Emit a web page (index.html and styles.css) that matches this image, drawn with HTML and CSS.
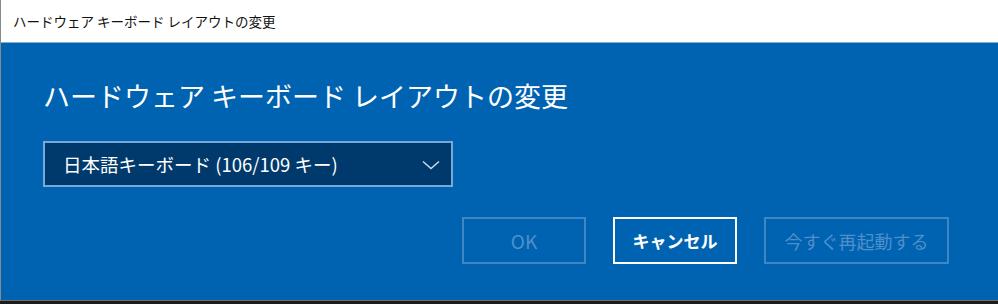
FILE: index.html
```html
<!DOCTYPE html>
<html lang="ja">
<head>
    <meta charset="UTF-8">
    <meta name="viewport" content="width=device-width, initial-scale=1.0">
    <title>ハードウェア キーボード レイアウトの変更</title>
    <link rel="stylesheet" href="styles.css">
</head>
<body>
    <div class="window">
        <div class="titlebar">ハードウェア キーボード レイアウトの変更</div>
        <div class="content">
            <h1 class="heading">ハードウェア キーボード レイアウトの変更</h1>
            <div class="select">
                <span class="select-text">日本語キーボード (106/109 キー)</span>
                <svg class="chevron" width="18" height="10" viewBox="0 0 18 10">
                    <polyline points="1,1.5 9,8.5 17,1.5" fill="none" stroke="#c9d9ea" stroke-width="1.5"/>
                </svg>
            </div>
            <div class="buttons">
                <button class="btn disabled latin">OK</button>
                <button class="btn focused">キャンセル</button>
                <button class="btn disabled wide">今すぐ再起動する</button>
            </div>
        </div>
    </div>
</body>
</html>
```

FILE: styles.css
```css
body {
    margin: 0;
    padding: 0;
    width: 998px;
    height: 304px;
    overflow: hidden;
    background: #1c1c1c;
    font-family: 'Noto Sans CJK JP', 'Noto Sans', sans-serif;
}
.window {
    height: 300px;
    border-left: 1px solid #8a8a8a;
    border-bottom: 1px solid #6f6f6f;
    display: flex;
    flex-direction: column;
}
.titlebar {
    height: 43px;
    box-sizing: border-box;
    background: #fff;
    border-bottom: 1px solid #7fb0dc;
    padding: 0 0 0 12px;
    font-size: 13.5px;
    line-height: 43px;
    color: #111;
}
.content {
    flex: 1;
    background: #0063b1;
    padding: 35px 49px 0 42px;
    display: flex;
    flex-direction: column;
}
.heading {
    margin: 0;
    font-size: 27px;
    font-weight: normal;
    line-height: 36px;
    color: #fff;
}
.select {
    margin-top: 27px;
    width: 410px;
    height: 46px;
    box-sizing: border-box;
    border: 2px solid #7aa8d6;
    background: #003a6d;
    display: flex;
    align-items: center;
    justify-content: space-between;
    padding: 0 11px 0 18px;
    color: #fff;
    font-size: 18.5px;
}
.chevron {
    margin-top: 1px;
}
.buttons {
    margin-top: 30px;
    display: flex;
    justify-content: flex-end;
    gap: 27px;
}
.btn {
    width: 124px;
    height: 47px;
    box-sizing: border-box;
    background: transparent;
    border: 2px solid #fff;
    font-family: inherit;
    font-size: 17px;
    color: #fff;
    padding: 0;
}
.btn.focused {
    font-weight: 600;
}
.btn.disabled {
    border-color: #3d87c6;
    color: #4f8fca;
}
.btn.latin {
    font-size: 19px;
}
.btn.wide {
    width: 185px;
    font-size: 18px;
}
```
